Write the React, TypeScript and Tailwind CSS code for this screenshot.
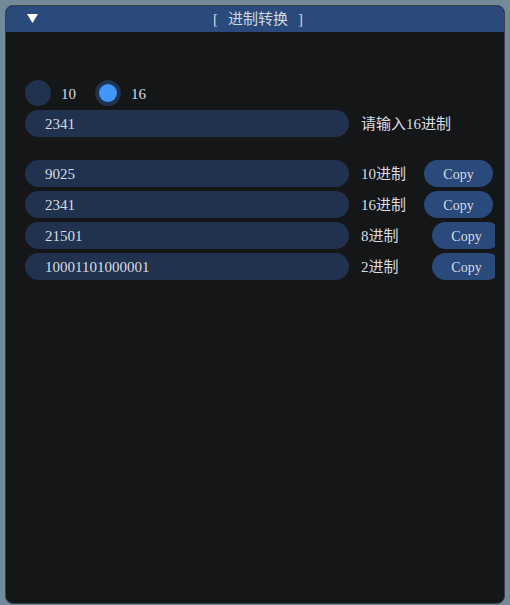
import React from "react";

const font = { fontFamily: '"Liberation Serif", "Noto Sans CJK SC", serif' };

const rows = [
  { value: "9025", label: "10进制", labelW: "w-[63px]" },
  { value: "2341", label: "16进制", labelW: "w-[63px]" },
  { value: "21501", label: "8进制", labelW: "w-[71px]" },
  { value: "10001101000001", label: "2进制", labelW: "w-[71px]" },
];

const Field = ({ value }: { value: string }) => (
  <div className="flex h-[27px] w-[324px] shrink-0 items-center rounded-full bg-[#21324e] pl-[20px] pt-[2px] text-[15px] text-[#d8dde3]">
    {value}
  </div>
);

export default function App() {
  return (
    <div className="h-[605px] w-[510px] bg-[#728a99] pl-[5px] pt-[5px]" style={font}>
      <div className="flex h-[599px] w-[500px] flex-col overflow-hidden rounded-[8px] border border-[#3b4048] bg-[#151618]">
        <div className="relative flex h-[26px] shrink-0 items-center justify-center gap-[10px] bg-[#294a7a] pl-[6px] text-[15px] text-[#d2d8e0]">
          <svg className="absolute left-[21px] top-[8px]" width="11" height="10" viewBox="0 0 11 10">
            <polygon points="0,0 11,0 5.5,9" fill="#ffffff" />
          </svg>
          <span>[</span>
          <span>进制转换</span>
          <span>]</span>
        </div>

        <div className="flex flex-col pl-[19px] pr-[9px] pt-[48px] text-[15px] text-[#d8dde3]">
          <div className="flex h-[26px] items-center">
            <div className="h-[26px] w-[26px] rounded-full bg-[#21324e]" />
            <span className="ml-[10px] w-[34px] pt-[2px]">10</span>
            <div className="flex h-[26px] w-[26px] items-center justify-center rounded-full bg-[#21324e]">
              <div className="h-[18px] w-[18px] rounded-full bg-[#4296fa]" />
            </div>
            <span className="ml-[10px] pt-[2px]">16</span>
          </div>

          <div className="mt-[4px] flex items-center">
            <Field value="2341" />
            <span className="ml-[12px] pt-[2px]">请输入16进制</span>
          </div>

          <div className="mt-[23px] flex flex-col gap-[4px] overflow-hidden">
            {rows.map((r) => (
              <div key={r.label} className="flex items-center">
                <Field value={r.value} />
                <span className={`ml-[12px] shrink-0 pt-[2px] ${r.labelW}`}>{r.label}</span>
                <div className="flex h-[27px] w-[69px] shrink-0 items-center justify-center rounded-full bg-[#294a7a] pt-[2px] text-[14px]">
                  Copy
                </div>
              </div>
            ))}
          </div>
        </div>
      </div>
    </div>
  );
}
